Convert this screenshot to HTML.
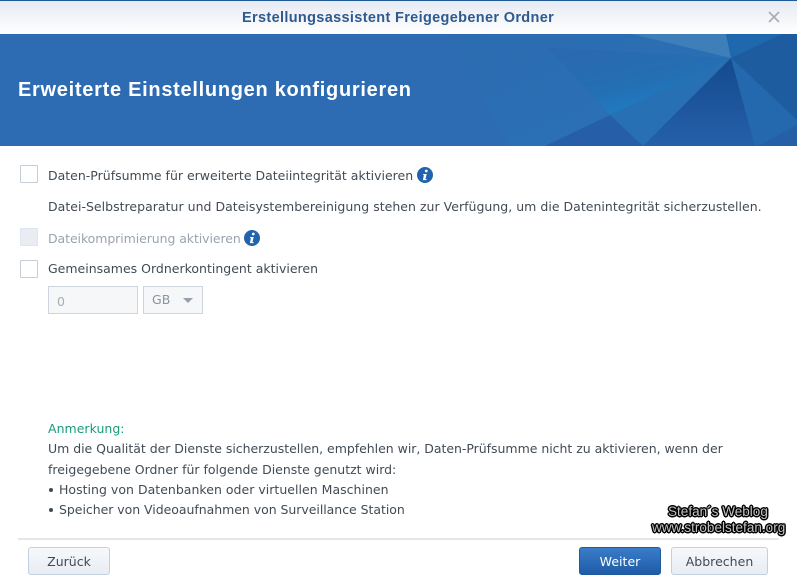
<!DOCTYPE html>
<html><head><meta charset="utf-8"><style>
html,body{margin:0;padding:0;background:#fff}
#p{position:relative;width:797px;height:581px;overflow:hidden;background:#fff;font-family:"DejaVu Sans",sans-serif;font-size:12.5px;letter-spacing:.02px;color:#414b55}
.t{position:absolute;white-space:nowrap;line-height:20px}
.b{position:absolute;box-sizing:border-box}
.cb{position:absolute;left:20px;width:18px;height:18px;box-sizing:border-box;border:1px solid #c3cedb;background:#fff;border-radius:1px}
.btn{position:absolute;top:547px;height:28px;box-sizing:border-box;border-radius:3px;text-align:center;line-height:27px;border:1px solid #c3d0e0;background:linear-gradient(#f6f8fb,#e8edf4)}
.i{position:absolute;width:16px;height:16px}
.wm{position:absolute;white-space:nowrap;color:#c4c4c4;font-family:"Liberation Sans",sans-serif;font-size:13.5px;line-height:16px;text-shadow:-1.5px 0 0 #000,1.5px 0 0 #000,0 -1.5px 0 #000,0 1.5px 0 #000,-1px -1px 0 #000,1px 1px 0 #000,-1px 1px 0 #000,1px -1px 0 #000}
</style></head><body><div id="p">
<div class="b" style="left:0;top:0;width:797px;height:1px;background:#1f5a96"></div>
<div class="b" style="left:0;top:1px;width:797px;height:33px;background:linear-gradient(#e6eaf2,#fff)"></div>
<div class="t" style="left:242px;top:8px;font-family:'Liberation Sans',sans-serif;font-weight:bold;font-size:14.5px;color:#2e5a8e;letter-spacing:.34px">Erstellungsassistent Freigegebener Ordner</div>
<svg class="b" style="left:767px;top:10px" width="14" height="14" viewBox="0 0 14 14"><path d="M2 2L12 12M12 2L2 12" stroke="#a9adb2" stroke-width="1.6" fill="none"/></svg>

<svg class="b" style="left:0;top:34px" width="797" height="112" viewBox="0 34 797 112">
<defs>
<linearGradient id="g1" x1="0" y1="0" x2="0.6" y2="1"><stop offset="0" stop-color="#2b69ae"/><stop offset=".6" stop-color="#246eb3"/><stop offset="1" stop-color="#1e80c6"/></linearGradient>
<linearGradient id="g2" x1="0" y1="0" x2="1" y2="1"><stop offset="0" stop-color="#2c6bb0"/><stop offset="1" stop-color="#2a72b6"/></linearGradient>
<linearGradient id="g3" x1="0" y1="0" x2="0" y2="1"><stop offset="0" stop-color="#144a8e"/><stop offset="1" stop-color="#2560a8"/></linearGradient>
</defs>
<rect x="0" y="34" width="797" height="112" fill="#2d6bb2"/>
<polygon points="450,34 632,34 731,58 610,115 545,146 508,146" fill="url(#g2)"/>
<polygon points="547,47 731,58 610,115" fill="url(#g1)"/>
<polygon points="632,34 726,34 731,58" fill="#3f7fb9"/>
<polygon points="726,34 782,34 731,58" fill="#1f68ae"/>
<polygon points="782,34 797,34 797,120 731,58" fill="#1d5c9f"/>
<polygon points="731,58 610,115 643,146" fill="#2770b3"/>
<polygon points="610,115 545,146 643,146" fill="#265fa8"/>
<polygon points="731,58 643,146 755,146" fill="url(#g3)"/>
<polygon points="731,58 797,120 797,125 758,146 755,146" fill="#2468ad"/>
<polygon points="797,125 758,146 797,146" fill="#2560a6"/>
</svg>
<div class="t" style="left:18px;top:80px;font-family:'Liberation Sans',sans-serif;font-weight:bold;font-size:20px;color:#fff;letter-spacing:.71px">Erweiterte Einstellungen konfigurieren</div>

<div class="cb" style="top:165px"></div>
<div class="t" style="left:48px;top:166px;letter-spacing:0">Daten-Prüfsumme für erweiterte Dateiintegrität aktivieren</div>
<svg class="i" style="left:417px;top:167px" viewBox="0 0 16 16"><circle cx="8" cy="8" r="8" fill="#2263ad"/><circle cx="9.3" cy="4" r="1.4" fill="#fff"/><path d="M6.3 7h3.4L8.5 12h1.1l-.2 1.1H5.9L6.9 8H6z" fill="#fff"/></svg>
<div class="t" style="left:48px;top:197px">Datei-Selbstreparatur und Dateisystembereinigung stehen zur Verfügung, um die Datenintegrität sicherzustellen.</div>

<div class="cb" style="top:228px;background:#e9edf3;border-color:#dfe5ec"></div>
<div class="t" style="left:48px;top:229px;color:#9aa3ae;letter-spacing:-.08px">Dateikomprimierung aktivieren</div>
<svg class="i" style="left:244px;top:230px" viewBox="0 0 16 16"><circle cx="8" cy="8" r="8" fill="#2263ad"/><circle cx="9.3" cy="4" r="1.4" fill="#fff"/><path d="M6.3 7h3.4L8.5 12h1.1l-.2 1.1H5.9L6.9 8H6z" fill="#fff"/></svg>

<div class="cb" style="top:260px"></div>
<div class="t" style="left:48px;top:259px;letter-spacing:0">Gemeinsames Ordnerkontingent aktivieren</div>

<div class="b" style="left:48px;top:286px;width:90px;height:28px;background:#f5f7f9;border:1px solid #cdd6e0"></div>
<div class="t" style="left:57px;top:292px;color:#a4acb6">0</div>
<div class="b" style="left:143px;top:286px;width:60px;height:28px;background:#f5f7f9;border:1px solid #cdd6e0"></div>
<div class="t" style="left:152px;top:290px;color:#8a939e">GB</div>
<div class="b" style="left:183px;top:298px;width:0;height:0;border-left:5.5px solid transparent;border-right:5.5px solid transparent;border-top:5px solid #98a0aa"></div>

<div class="t" style="left:48px;top:419px;color:#1a9b78">Anmerkung:</div>
<div class="t" style="left:48px;top:439px;letter-spacing:-.03px">Um die Qualität der Dienste sicherzustellen, empfehlen wir, Daten-Prüfsumme nicht zu aktivieren, wenn der</div>
<div class="t" style="left:48px;top:460px;letter-spacing:-.01px">freigegebene Ordner für folgende Dienste genutzt wird:</div>
<div class="b" style="left:49px;top:488px;width:4px;height:4px;border-radius:50%;background:#414b55"></div>
<div class="t" style="left:59px;top:480px">Hosting von Datenbanken oder virtuellen Maschinen</div>
<div class="b" style="left:49px;top:508px;width:4px;height:4px;border-radius:50%;background:#414b55"></div>
<div class="t" style="left:59px;top:500px;letter-spacing:-.04px">Speicher von Videoaufnahmen von Surveillance Station</div>

<div class="b" style="left:18px;top:538px;width:761px;height:2px;background:#e6e6e6"></div>
<div class="btn" style="left:28px;width:82px">Zurück</div>
<div class="btn" style="left:579px;width:82px;background:linear-gradient(#3a7cc8,#1f5ca8);border-color:#1f5a9e;color:#fff">Weiter</div>
<div class="btn" style="left:671px;width:97px">Abbrechen</div>

<div class="wm" style="left:668px;top:504px">Stefan´s Weblog</div>
<div class="wm" style="left:652px;top:520px">www.strobelstefan.org</div>
</div></body></html>
